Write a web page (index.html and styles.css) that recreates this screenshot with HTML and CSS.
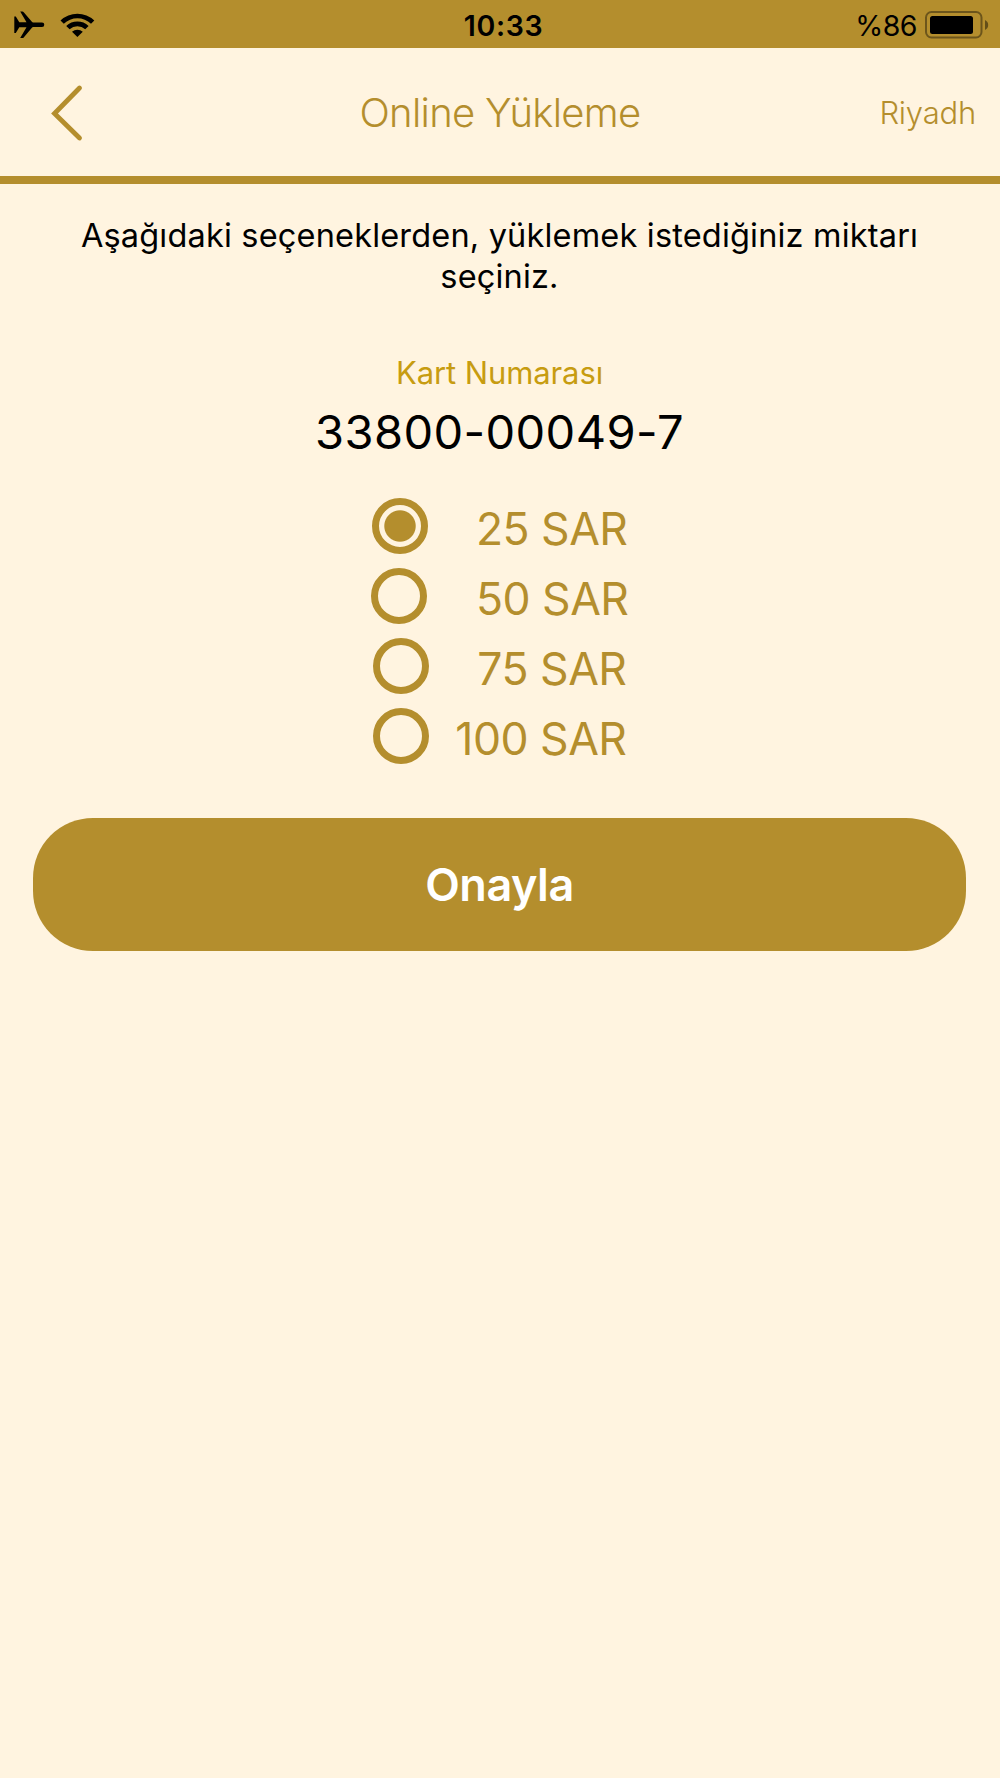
FILE: index.html
```html
<!DOCTYPE html>
<html lang="tr">
<head>
<meta charset="utf-8">
<title>Online Yükleme</title>
<link rel="stylesheet" href="styles.css">
</head>
<body>
<div class="status">
  <div class="status-side">
    <svg class="plane" width="31" height="28" viewBox="0 0 31 28"><path d="M.3 5.500h1.500L5.300 11.300h7.200L6.200 .5h2.200q.8 0 1.300.7l8.200 9.600q.5.700 1.200.7H28q2.300 0 2.300 2.300T28 16.100h-8.900q-.7 0-1.200.7l-8.200 9.600q-.5.700-1.300.7H6.200l6.300-10.800H5.300L1.800 22.100H.3z"/></svg>
    <svg class="wifi" width="36" height="26" viewBox="0 0 36 26"><path d="M.5 8.400A24.600 24.600 0 0 1 34.300 8.400L31 11.700A19.800 19.800 0 0 0 3.800 11.700zM6.200 14A16.500 16.500 0 0 1 28.600 14L25.200 17.300A11.600 11.600 0 0 0 9.600 17.300zM12 19.700A8.200 8.200 0 0 1 22.800 19.700L17.400 24.900z"/></svg>
  </div>
  <span class="time">10:33</span>
  <div class="status-side status-right">
    <span class="percent">%86</span>
    <svg width="64" height="28" viewBox="0 0 64 28"><rect x="1" y="1" width="55.500" height="25.500" rx="5.500" fill="none" stroke="#000" stroke-opacity=".4" stroke-width="2"/><rect x="5" y="5" width="43" height="18" rx="2.500"/><path d="M60 9q3.200 1.700 3.200 5T60 19z" fill-opacity=".45"/></svg>
  </div>
</div>
<header class="header">
  <svg class="back" width="32" height="58" viewBox="0 0 32 58"><path d="M28.500 4 3.500 29.500 28.500 54"/></svg>
  <h1 class="title">Online Yükleme</h1>
  <span class="city">Riyadh</span>
</header>
<main class="main">
  <p class="intro">Aşağıdaki seçeneklerden, yüklemek istediğiniz miktarı<br>seçiniz.</p>
  <p class="label">Kart Numarası</p>
  <p class="number">33800-00049-7</p>
  <div class="options">
    <div class="option option-25"><span class="radio selected"></span><span class="amount">25 SAR</span></div>
    <div class="option option-50"><span class="radio"></span><span class="amount">50 SAR</span></div>
    <div class="option option-75"><span class="radio"></span><span class="amount">75 SAR</span></div>
    <div class="option option-100"><span class="radio"></span><span class="amount">100 SAR</span></div>
  </div>
  <button class="confirm">Onayla</button>
</main>
</body>
</html>
```
FILE: styles.css
```css
* { box-sizing: border-box; }
body {
  margin: 0;
  min-height: 1778px;
  background: #fff4e0;
  color: #000;
  font-family: Inter, "Noto Sans", sans-serif;
}
h1, p { margin: 0; font-weight: 400; white-space: nowrap; }
svg { display: block; flex: none; }
.status {
  display: grid;
  grid-template-columns: 1fr auto 1fr;
  align-items: center;
  height: 48px;
  padding: 2px 11px 0 14px;
  background: #b48e2d;
}
.status-side { display: flex; align-items: center; }
.status-right { justify-content: flex-end; gap: 8px; }
.wifi { margin-left: 15px; }
.time { margin-left: 4px; padding-top: 1px; font-size: 28.500px; font-weight: 600; line-height: 34px; letter-spacing: .7px; }
.percent { padding-top: 1px; font-size: 28.500px; line-height: 34px; letter-spacing: -.5px; }
.header {
  display: grid;
  grid-template-columns: 1fr auto 1fr;
  align-items: center;
  height: 136px;
  padding: 0 24px;
  border-bottom: 8px solid #b48e2d;
  color: #b48e2d;
}
.back { margin: 1px 0 0 27px; }
.back path { fill: none; stroke: #b48e2d; stroke-width: 4.800; stroke-linecap: round; stroke-linejoin: miter; }
.title { padding-top: 2px; font-size: 40px; font-weight: 300; line-height: 48px; letter-spacing: -.7px; }
.city { justify-self: end; padding-top: 1px; font-size: 31px; font-weight: 300; line-height: 38px; letter-spacing: -.2px; }
.main { display: flex; flex-direction: column; align-items: center; padding: 31px 1px 0 0; }
.intro { font-size: 32.500px; line-height: 41px; letter-spacing: .18px; text-align: center; }
.label { margin-top: 57px; font-size: 31px; line-height: 38px; letter-spacing: -.1px; color: #c79c11; }
.number { margin-top: 12px; font-size: 47px; line-height: 56px; letter-spacing: .4px; }
.options { display: flex; flex-direction: column; align-items: center; margin-top: 31px; }
.option { display: flex; align-items: center; justify-content: space-between; height: 70px; color: #b48e2d; }
.option-25 { width: 256px; }
.option-50 { width: 258px; }
.option-75, .option-100 { width: 254px; }
.radio { width: 56px; height: 56px; border: 7px solid #b48e2d; border-radius: 50%; }
.selected { background: radial-gradient(circle, #b48e2d 15.200px, transparent 16.200px); }
.amount { padding-top: 5px; font-size: 44.500px; font-weight: 400; line-height: 54px; letter-spacing: -.5px; }
.confirm {
  width: 933px;
  height: 133px;
  margin-top: 47px;
  border: 0;
  border-radius: 60px;
  background: #b48e2d;
  color: #fff;
  font: 600 45px/54px Inter, "Noto Sans", sans-serif;
  letter-spacing: -.5px;
}
```
